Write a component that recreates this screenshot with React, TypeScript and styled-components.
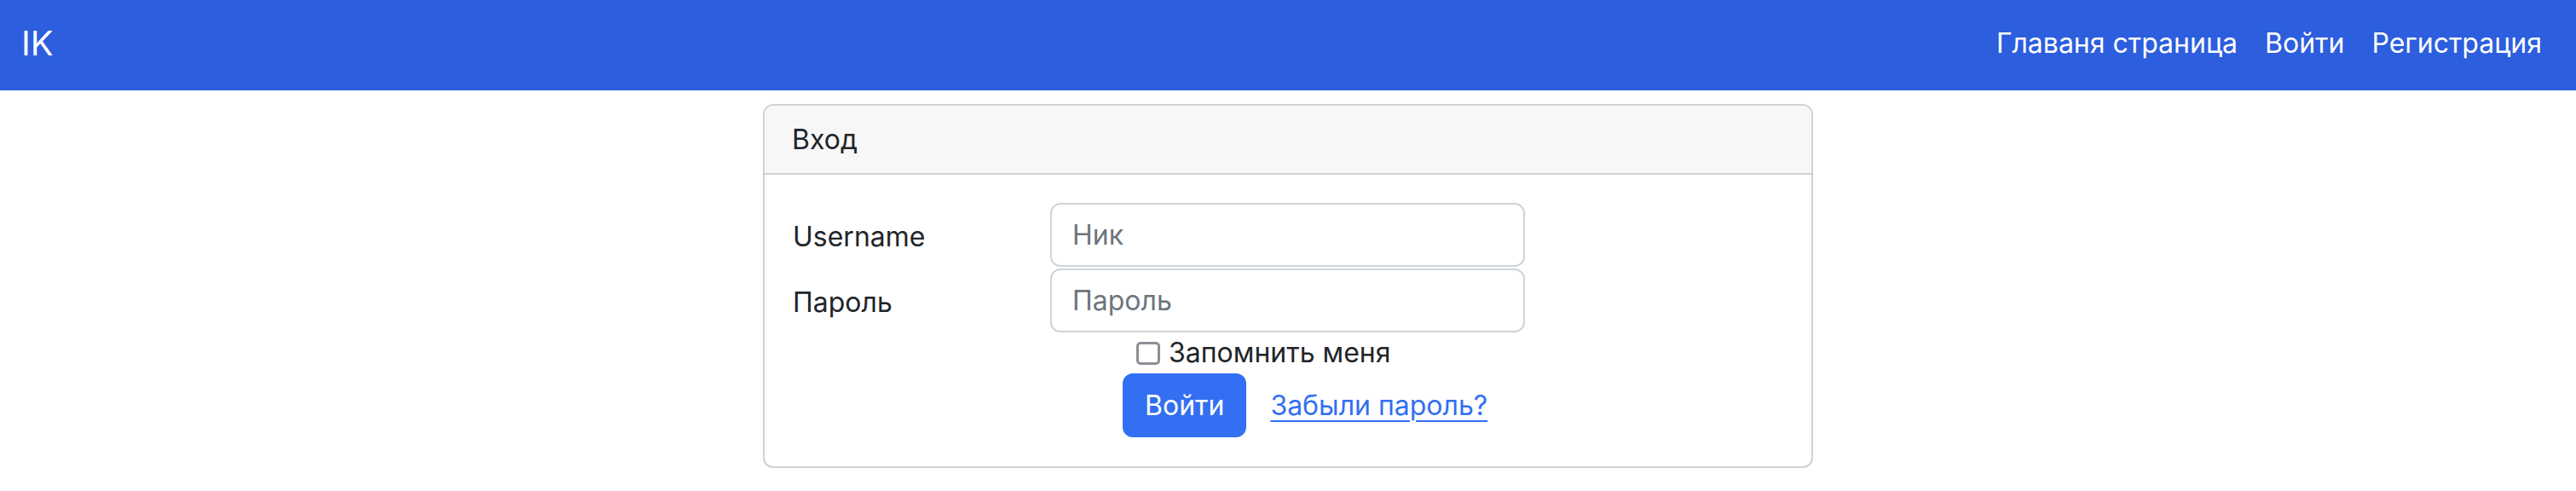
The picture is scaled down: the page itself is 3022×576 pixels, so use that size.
import React from "react";
import styled, { createGlobalStyle } from "styled-components";

const GlobalStyle = createGlobalStyle`
  html, body {
    margin: 0;
    padding: 0;
    background: #ffffff;
  }
  body {
    font-family: Inter, "Noto Sans", "Liberation Sans", sans-serif;
    color: #212529;
  }
  * { box-sizing: border-box; }
`;

const Navbar = styled.header`
  height: 106px;
  background: #2c5ede;
  display: flex;
  align-items: center;
  justify-content: space-between;
  padding: 0 24px 4px 24px;
`;

const Brand = styled.a`
  font-size: 40px;
  line-height: 60px;
  color: #ffffff;
  text-decoration: none;
  padding-left: 1px;
`;

const NavList = styled.nav`
  display: flex;
  align-items: center;
`;

const NavLink = styled.a`
  font-size: 32px;
  line-height: 48px;
  color: #ffffff;
  text-decoration: none;
  padding: 0 16px;
`;

const Main = styled.main`
  display: flex;
  justify-content: center;
  padding-top: 16px;
`;

const Card = styled.section`
  width: 1232px;
  border: 2px solid #d2d2d2;
  border-radius: 12px;
  overflow: hidden;
`;

const CardHeader = styled.div`
  background: #f7f7f7;
  border-bottom: 2px solid #d2d2d2;
  padding: 16px 32px 15px 32px;
  font-size: 32px;
  line-height: 48px;
`;

const CardBody = styled.form`
  padding: 33px 32px 34px 32px;
  display: flex;
  flex-direction: column;
`;

const FieldGrid = styled.div`
  display: grid;
  grid-template-columns: 303px 557px;
  row-gap: 2px;
  align-items: center;
`;

const Label = styled.label`
  font-size: 32px;
  line-height: 48px;
  padding-left: 1px;
  padding-top: 4px;
`;

const TextInput = styled.input`
  height: 75px;
  width: 557px;
  border: 2px solid #ced4da;
  border-radius: 12px;
  padding: 0 24px;
  font-family: inherit;
  font-size: 32px;
  color: #212529;
  background: #ffffff;
  outline: none;
  &::placeholder {
    color: #6c757d;
  }
`;

const CheckRow = styled.label`
  display: flex;
  align-items: center;
  gap: 10px;
  margin-left: 404px;
  height: 48px;
  font-size: 32px;
  line-height: 48px;
`;

const CheckBox = styled.input`
  appearance: none;
  margin: 0;
  width: 28px;
  height: 27px;
  border: 3px solid #8e8e96;
  border-radius: 5px;
  background: #ffffff;
  flex: none;
`;

const ActionRow = styled.div`
  display: flex;
  align-items: center;
  gap: 28px;
  margin-left: 388px;
`;

const SubmitButton = styled.button`
  height: 75px;
  padding: 0 26px;
  border: none;
  border-radius: 12px;
  background: #336ff2;
  color: #ffffff;
  font-family: inherit;
  font-size: 32px;
  line-height: 48px;
`;

const ForgotLink = styled.a`
  font-size: 32px;
  line-height: 48px;
  color: #336ff2;
  text-decoration: underline;
  text-underline-offset: 6px;
  text-decoration-thickness: 2px;
`;

export default function App() {
  return (
    <>
      <GlobalStyle />
      <Navbar>
        <Brand href="#">IK</Brand>
        <NavList>
          <NavLink href="#">Главаня страница</NavLink>
          <NavLink href="#">Войти</NavLink>
          <NavLink href="#">Регистрация</NavLink>
        </NavList>
      </Navbar>
      <Main>
        <Card>
          <CardHeader>Вход</CardHeader>
          <CardBody onSubmit={(e) => e.preventDefault()}>
            <FieldGrid>
              <Label htmlFor="username">Username</Label>
              <TextInput id="username" type="text" placeholder="Ник" />
              <Label htmlFor="password">Пароль</Label>
              <TextInput id="password" type="password" placeholder="Пароль" />
            </FieldGrid>
            <CheckRow>
              <CheckBox type="checkbox" />
              Запомнить меня
            </CheckRow>
            <ActionRow>
              <SubmitButton type="submit">Войти</SubmitButton>
              <ForgotLink href="#">Забыли пароль?</ForgotLink>
            </ActionRow>
          </CardBody>
        </Card>
      </Main>
    </>
  );
}
